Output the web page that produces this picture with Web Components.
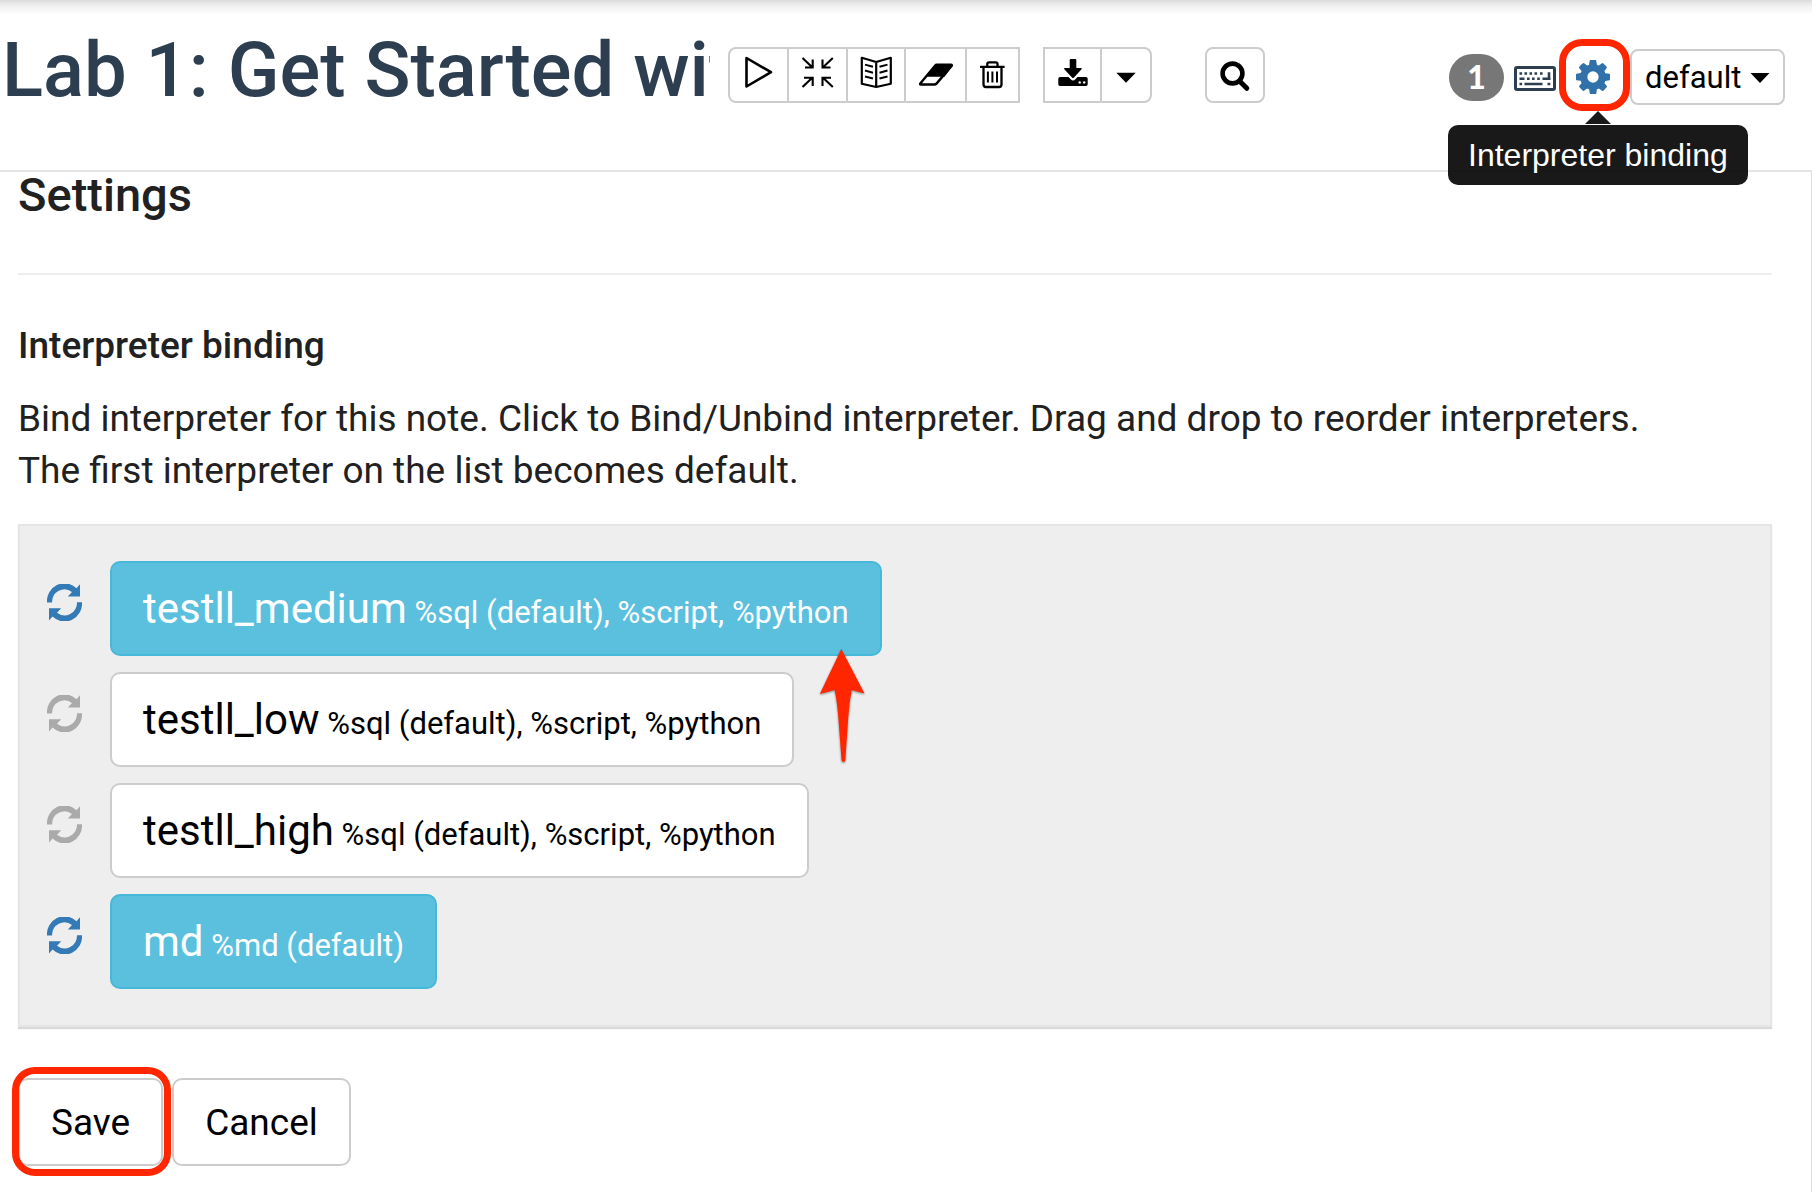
<!DOCTYPE html>
<html lang="en">
<head>
<meta charset="utf-8">
<title>Lab 1: Get Started with</title>
<style>
  body { margin: 0; background: #fff; color: #212121; font-family: Roboto, "Liberation Sans", sans-serif; font-size: 37px; }
</style>
</head>
<body>
<note-page></note-page>
<script>
const ICONS = {
  play: [33, '<path d="M4.5 3v28.5L29 17.2z" fill="none" stroke="#000" stroke-width="2.6" stroke-linejoin="round"/>'],
  compress: [33, '<path d="M1.5 3l10 9.5M11.7 4.5v8H4M31.8 3l-10 9.5M21.5 4.5v8h8M1.5 32l10-9.5M11.7 31v-8.3H3M31.8 32l-10-9.5M21.5 31v-8.3H30" fill="none" stroke="#000" stroke-width="2.1"/>'],
  book: [32, '<path d="M1.8 2.8L16.2 7l14.6-4.2v26L16.2 32 1.8 28.800zM16.200 7v25" fill="none" stroke="#000" stroke-width="2.200" stroke-linejoin="round"/><path d="M5 9.600l8 2.200M5 15.500l8 2.200M5 21.500l8 2M27.500 9.600l-8 2.200M27.500 15.500l-8 2.200M27.500 21.500l-8 2" stroke="#000" stroke-width="2"/>'],
  eraser: [35, '<path d="M18.800 9.800H33q1.400 0 .5 1.200L18.500 28.600q-.8.9-2 .9H3q-1.500 0-.5-1.200L17 10.700q.8-.9 1.800-.9z" fill="#fff" stroke="#000" stroke-width="2.400"/><path d="M18 9h16l.5 2L26.500 21.800H8.500z"/>'],
  trash: [27, '<path d="M1 11.800h24.600M8.300 11V9q0-1.700 1.700-1.700h6.800q1.700 0 1.700 1.700v2M4.500 12.500v17q0 2.500 2.500 2.500h13q2.500 0 2.500-2.500v-17" fill="none" stroke="#000" stroke-width="2.300"/><path d="M8.900 16.500v11M13.400 16.500v11M18 16.500v11" stroke="#000" stroke-width="2"/>'],
  download: [31, '<path d="M12.700 5q0-1 1-1h4.600q1 0 1 1v8H24q1.300 0 .5 1.200L17 22.500q-1 1-2 0L7.300 14.200Q6.500 13 8 13h4.700z"/><path d="M3 22h8.500l2.400 2.500q2.100 2 4.200 0l2.400-2.500H29q1.700 0 1.700 1.700v5.600Q30.700 31 29 31H3q-1.700 0-1.700-1.700v-5.600Q1.300 22 3 22z"/><circle cx="22.700" cy="27.400" r="1.200" fill="#fff"/><circle cx="27.200" cy="27.400" r="1.200" fill="#fff"/>'],
  caret: [24, '<path d="M2.300 17.700h19.400L12 27.700z"/>'],
  search: [32, '<circle cx="13.500" cy="18.500" r="9.900" fill="none" stroke="#000" stroke-width="4.600"/><path d="M21 26.500l6.800 6.800" stroke="#000" stroke-width="5" stroke-linecap="round"/>']
};
const define = (name, html) => customElements.define(name, class extends HTMLElement {
  constructor() {
    super();
    this.attachShadow({ mode: 'open' }).innerHTML = html;
  }
});

// One bordered toolbar button; neighbours share a border.
customElements.define('tool-button', class extends HTMLElement {
  connectedCallback() {
    const [w, art] = ICONS[this.getAttribute('icon')];
    this.attachShadow({ mode: 'open' }).innerHTML = `
      <style>
        :host { display: block; }
        :host(:not(:first-child)) { margin-left: -2px; }
        button { display: flex; align-items: center; height: 56px; padding: 0 12px; margin: 0; border: 2px solid #ccc; background: #fff; cursor: pointer; border-radius: var(--corners, 0); }
        svg { display: block; }
      </style>
      <button type="button" aria-label="${this.getAttribute('label')}"><svg width="${w}" height="40" viewBox="0 0 ${w} 40">${art}</svg></button>`;
  }
});

define('button-group', '<style>:host { display: flex; }</style><slot></slot>');

define('red-ring', `<style>:host { position: absolute; box-sizing: border-box; border: 7px solid #ff2600; border-radius: 23px; pointer-events: none; }</style>`);

define('hint-bubble', `
  <style>
    :host { position: absolute; display: block; background: rgba(0,0,0,.9); color: #fff; border-radius: 10px; padding: 0 20px; font: 32px/60px "Liberation Sans", Arial, sans-serif; white-space: nowrap; }
    :host::before { content: ""; position: absolute; left: 50%; bottom: 100%; margin: 0 0 1px -13px; border: 13px solid transparent; border-top: 0; border-bottom-color: rgba(0,0,0,.9); }
  </style><slot></slot>`);

define('note-status', `
  <style>
    :host { display: flex; align-items: center; height: 56px; }
    .badge { width: 55px; height: 47px; border-radius: 24px; background: #777; color: #fff; font: 900 32px/46px Lato, sans-serif; text-align: center; margin-right: 10px; }
    button { margin: 0; padding: 0; border: 0; background: none; display: block; cursor: pointer; }
    svg { display: block; }
    .gear { position: relative; margin: 0 20px; }
    red-ring { inset: -21px -20px -17px -17px; }
    hint-bubble { left: -128px; top: 65px; }
    label { display: grid; align-items: center; }
    select { grid-area: 1 / 1; appearance: none; height: 56px; margin: 0; padding: 0 41px 0 13px; border: 2px solid #ccc; border-radius: 8px; background: #fff; color: #000; font: 31px Roboto, sans-serif; }
    label svg { grid-area: 1 / 1; justify-self: end; margin-right: 15px; pointer-events: none; }
  </style>
  <span class="badge">1</span>
  <button type="button" aria-label="Keyboard shortcuts"><svg width="42" height="34" viewBox="0 -3 42 34"><rect x="1.500" y="4.500" width="39" height="22" rx="1.500" fill="#fff" stroke="#2c3e50" stroke-width="3"/><path d="M5.500 10.500h2.600M10.500 10.500h2.600M15.500 10.500h2.600M20.500 10.500h2.600M26 10.500h2.600M5.500 15.700h5M13 15.700h2.600M18 15.700h2.600M23.200 15.700h2.600M28.500 15.700h8M35 9.200v6.500M5.500 21h2.600M10.500 21h18M33.500 21h2.800" stroke="#2c3e50" stroke-width="2.600"/></svg></button>
  <div class="gear">
    <button type="button" aria-label="Interpreter binding"><svg width="34" height="34" viewBox="0 128 1536 1536"><path fill="#3071a9" d="M1024 896q0-106-75-181t-181-75-181 75-75 181 75 181 181 75 181-75 75-181zm512-109v222q0 12-8 23t-20 13l-185 28q-19 54-39 91 35 50 107 138 10 12 10 25t-9 23q-27 37-99 108t-94 71q-12 0-26-9l-138-108q-44 23-91 38-16 136-29 186-7 28-36 28h-222q-14 0-24.500-8.500t-11.500-21.500l-28-184q-49-16-90-37l-141 107q-10 9-25 9-14 0-25-11-126-114-165-168-7-10-7-23 0-12 8-23 15-21 51-66.500t54-70.500q-27-50-41-99l-183-27q-13-2-21-12.500t-8-23.500v-222q0-12 8-23t19-13l186-28q14-46 39-92-40-57-107-138-10-12-10-24 0-10 9-23 26-36 98.500-107.500t94.500-71.500q13 0 26 10l138 107q44-23 91-38 16-136 29-186 7-28 36-28h222q14 0 24.500 8.500t11.500 21.500l28 184q49 16 90 37l142-107q9-9 24-9 13 0 25 10 129 119 165 170 7 8 7 22 0 12-8 23-15 21-51 66.500t-54 70.500q26 50 41 98l183 28q13 2 21 12.500t8 23.500z"/></svg></button>
    <red-ring></red-ring>
    <hint-bubble role="tooltip">Interpreter binding</hint-bubble>
  </div>
  <label><select aria-label="View mode"><option>default</option></select><svg width="20" height="12" viewBox="0 0 20 12"><path d="M.5 2h19L10 12z"/></svg></label>`);

define('note-header', `
  <style>
    :host { display: flex; align-items: flex-start; padding: 28px 27px 58px 2px; border-bottom: 2px solid #e4e4e4; background: linear-gradient(#dcdcdc, #f1f1f1 6px, #fff 15px); }
    h1 { margin: 0 18px 0 0; flex: 0 1 708px; min-width: 0; overflow: hidden; white-space: nowrap; color: #2c3e50; font-weight: 500; font-size: 76px; line-height: 84px; }
    nav { display: flex; margin-top: 19px; }
    .files { margin-left: 23px; }
    .find { margin-left: 53px; }
    note-status { margin: 21px 0 0 auto; }
    .left { --corners: 8px 0 0 8px; }
    .right { --corners: 0 8px 8px 0; }
    .all { --corners: 8px; }
  </style>
  <h1>Lab 1: Get Started with</h1>
  <nav aria-label="Note actions">
    <button-group>
      <tool-button class="left" icon="play" label="Run all"></tool-button>
      <tool-button icon="compress" label="Hide code"></tool-button>
      <tool-button icon="book" label="Hide output"></tool-button>
      <tool-button icon="eraser" label="Clear output"></tool-button>
      <tool-button icon="trash" label="Remove note"></tool-button>
    </button-group>
    <button-group class="files">
      <tool-button icon="download" label="Export"></tool-button>
      <tool-button class="right" icon="caret" label="More"></tool-button>
    </button-group>
    <button-group class="find">
      <tool-button class="all" icon="search" label="Search"></tool-button>
    </button-group>
  </nav>
  <note-status></note-status>`);

define('interpreter-row', `
  <style>
    :host { display: flex; align-items: flex-start; gap: 28px; position: relative; --c: #aaa; }
    :host([bound]) { --c: #337ab7; }
    button { margin: 0; cursor: pointer; }
    .restart { border: 0; background: none; padding: 23px 0 0; color: var(--c); }
    svg { display: block; }
    .item { height: 95px; padding: 0 31px; border: 2px solid #ccc; border-radius: 10px; background: #fff; color: #000; font: 42px Roboto, sans-serif; white-space: pre; }
    :host([bound]) .item { background: #5bc0de; border-color: #46b8da; color: #fff; }
    small { font-size: 31px; }
  </style>
  <button class="restart" type="button" aria-label="Restart"><svg width="35" height="37" viewBox="0 0 35 37" fill="currentColor"><path d="M0 18.500A17.500 17.800 0 0 1 29.500 4.200L33 .3v12.200H20.800l4.200-4.500A12.500 12.800 0 0 0 5 18.500z"/><path transform="rotate(180 17.500 18.400)" d="M0 18.500A17.500 17.800 0 0 1 29.500 4.200L33 .3v12.200H20.800l4.200-4.500A12.500 12.800 0 0 0 5 18.500z"/></svg></button>
  <button class="item" type="button"><slot name="name"></slot><small> <slot></slot></small></button>
  <slot name="mark"></slot>`);

define('pointer-arrow', `
  <style>:host { position: absolute; left: 770px; top: 86px; z-index: 1; pointer-events: none; } svg { display: block; filter: drop-shadow(0 1px 1px rgba(0,0,0,.45)); }</style>
  <svg width="52" height="118" viewBox="0 0 52 118"><path fill="#ff2600" d="M24.300 2L47.500 46.500 34.700 43q-2.400 12-3.400 27L28.300 113q-.2 2-1.900 2t-1.900-2L21.300 70Q20 54 17.600 43L2.800 47z"/></svg>`);

define('action-button', `
  <style>
    :host { display: block; position: relative; }
    button { height: 88px; margin: 0; padding: 0 31px; border: 2px solid #ccc; border-radius: 10px; background: #fff; color: #000; font: 37px Roboto, sans-serif; cursor: pointer; display: block; }
    red-ring { display: none; inset: -11px -8px -10px -6px; }
    :host([marked]) red-ring { display: block; }
  </style>
  <button type="button"><slot></slot></button><red-ring></red-ring>`);

define('note-settings', `
  <style>
    :host { display: block; padding: 0 39px 24px 18px; border-right: 1px solid #ddd; }
    h2, h3, p { margin: 0; }
    h2 { font-size: 47px; line-height: 46px; font-weight: 500; }
    hr { margin: 55px 0 45px; border: 0; border-top: 2px solid #eee; }
    h3 { font-size: 37px; line-height: 52px; font-weight: 500; }
    p { margin: 21px 0 27px; line-height: 52px; }
    .panel { display: flex; flex-direction: column; gap: 16px; padding: 35px 27px 36px; background: #eee; border: 2px solid #e5e5e5; box-shadow: 0 2px 1px rgba(0,0,0,.15); }
    .actions { display: flex; gap: 9px; margin-top: 51px; }
  </style>
  <h2>Settings</h2>
  <hr>
  <h3>Interpreter binding</h3>
  <p>Bind interpreter for this note. Click to Bind/Unbind interpreter. Drag and drop to reorder interpreters.<br>The first interpreter on the list becomes default.</p>
  <div class="panel">
    <interpreter-row bound><span slot="name">testll_medium</span>%sql (default), %script, %python<pointer-arrow slot="mark"></pointer-arrow></interpreter-row>
    <interpreter-row><span slot="name">testll_low</span>%sql (default), %script, %python</interpreter-row>
    <interpreter-row><span slot="name">testll_high</span>%sql (default), %script, %python</interpreter-row>
    <interpreter-row bound><span slot="name">md</span>%md (default)</interpreter-row>
  </div>
  <div class="actions">
    <action-button marked>Save</action-button>
    <action-button>Cancel</action-button>
  </div>`);

define('note-page', `
  <style>
    :host { display: flex; flex-direction: column; min-height: 100vh; }
    note-header { position: relative; z-index: 1; }
    note-settings { flex: 1; }
  </style>
  <note-header></note-header>
  <note-settings></note-settings>`);
</script>
</body>
</html>
